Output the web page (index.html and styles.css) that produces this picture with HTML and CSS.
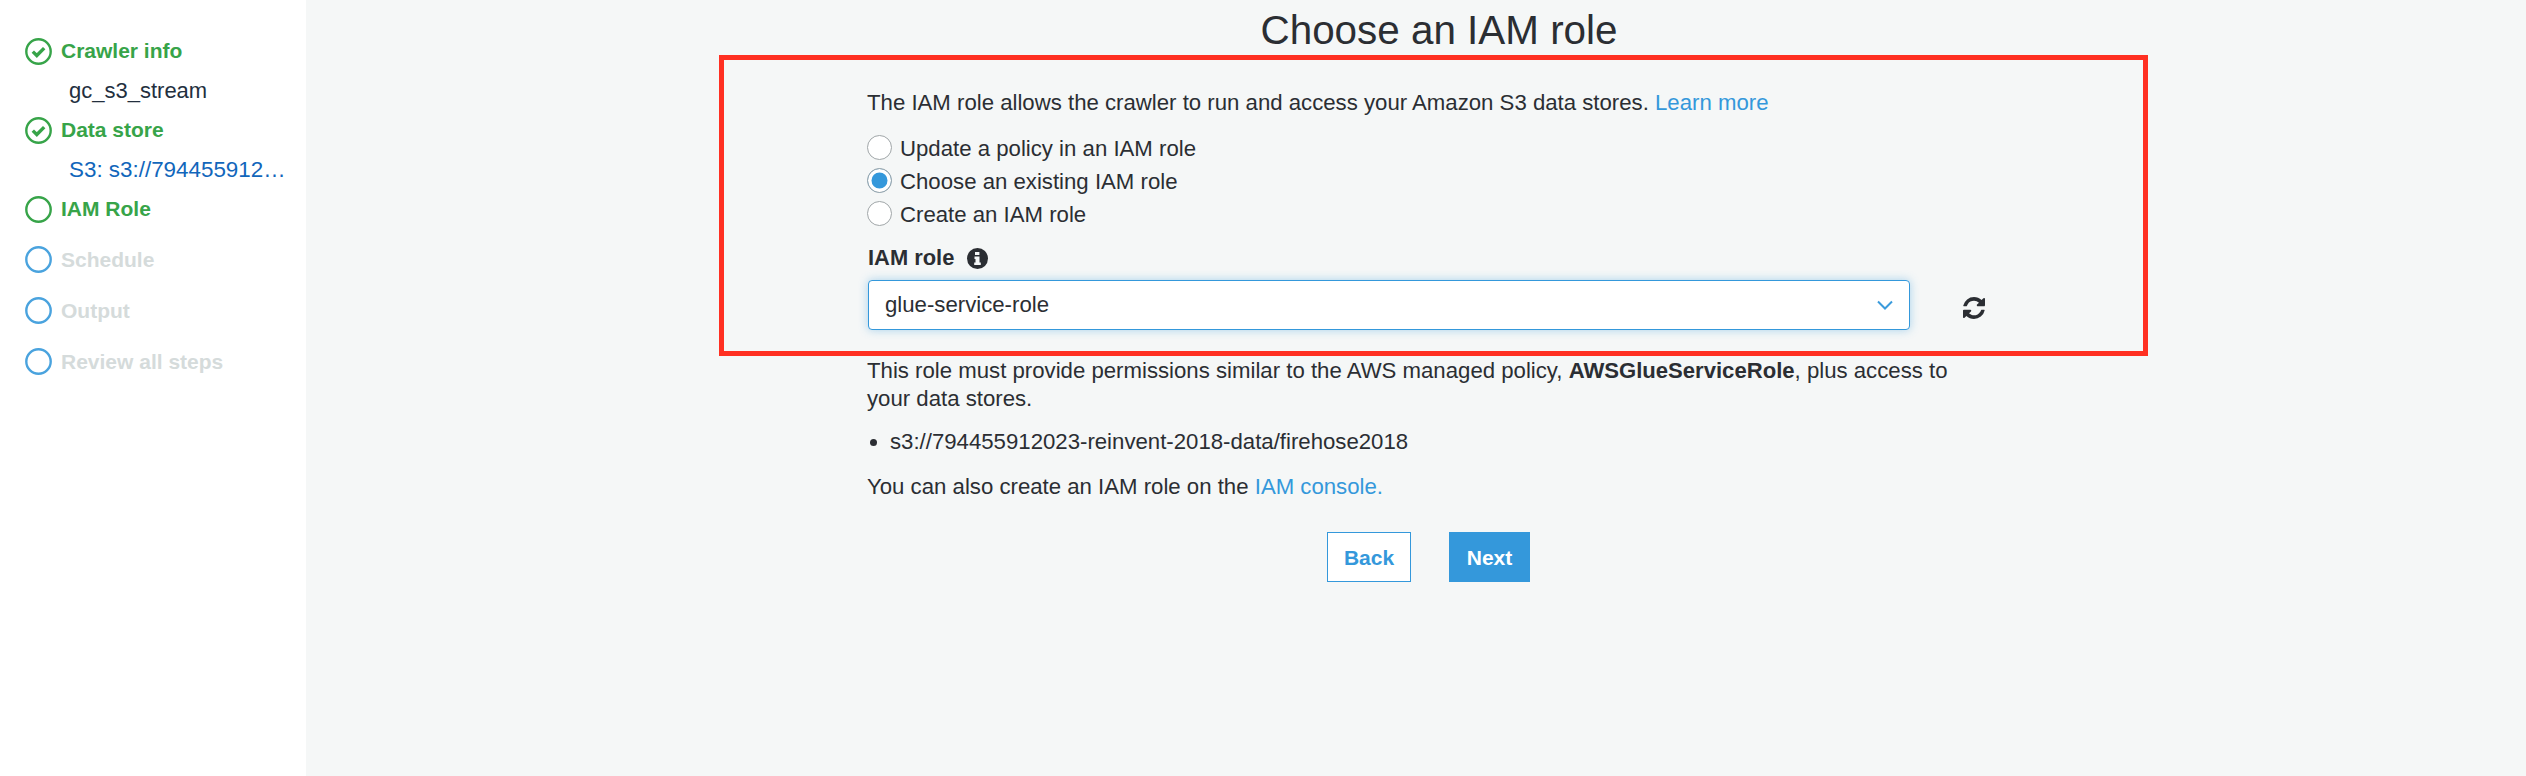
FILE: index.html
```html
<!DOCTYPE html>
<html lang="en">
<head>
<meta charset="utf-8">
<title>Choose an IAM role</title>
<link rel="stylesheet" href="styles.css">
</head>
<body>
<div class="page">
  <nav class="sidebar">
    <div class="step step-done">
      <svg class="step-icon" viewBox="0 0 27 27"><circle cx="13.5" cy="13.5" r="12.2" fill="none" stroke="#37a449" stroke-width="2.4"/><path d="M7.8 13.6l4 3.9 7.4-7.4" fill="none" stroke="#37a449" stroke-width="3.4"/></svg>
      <span>Crawler info</span>
    </div>
    <div class="step-detail">gc_s3_stream</div>
    <div class="step step-done">
      <svg class="step-icon" viewBox="0 0 27 27"><circle cx="13.5" cy="13.5" r="12.2" fill="none" stroke="#37a449" stroke-width="2.4"/><path d="M7.8 13.6l4 3.9 7.4-7.4" fill="none" stroke="#37a449" stroke-width="3.4"/></svg>
      <span>Data store</span>
    </div>
    <div class="step-detail step-link">S3: s3://794455912…</div>
    <div class="step step-done">
      <svg class="step-icon" viewBox="0 0 27 27"><circle cx="13.5" cy="13.5" r="12.2" fill="none" stroke="#37a449" stroke-width="2.4"/></svg>
      <span>IAM Role</span>
    </div>
    <div class="step step-todo">
      <svg class="step-icon" viewBox="0 0 27 27"><circle cx="13.5" cy="13.5" r="12.2" fill="none" stroke="#4aa3de" stroke-width="2.4"/></svg>
      <span>Schedule</span>
    </div>
    <div class="step step-todo">
      <svg class="step-icon" viewBox="0 0 27 27"><circle cx="13.5" cy="13.5" r="12.2" fill="none" stroke="#4aa3de" stroke-width="2.4"/></svg>
      <span>Output</span>
    </div>
    <div class="step step-todo">
      <svg class="step-icon" viewBox="0 0 27 27"><circle cx="13.5" cy="13.5" r="12.2" fill="none" stroke="#4aa3de" stroke-width="2.4"/></svg>
      <span>Review all steps</span>
    </div>
  </nav>
  <main class="main">
    <div class="highlight"></div>
    <div class="column">
      <h1 class="title">Choose an IAM role</h1>
      <p class="intro">The IAM role allows the crawler to run and access your Amazon S3 data stores. <a class="link" href="#">Learn more</a></p>
      <div class="radios">
        <div class="radio-row"><span class="radio"></span><span class="radio-label">Update a policy in an IAM role</span></div>
        <div class="radio-row"><span class="radio radio-on"></span><span class="radio-label">Choose an existing IAM role</span></div>
        <div class="radio-row"><span class="radio"></span><span class="radio-label">Create an IAM role</span></div>
      </div>
      <div class="field-label"><span>IAM role</span>
        <svg class="info-icon" viewBox="0 0 21 21"><circle cx="10.5" cy="10.5" r="10.5" fill="#2b2e33"/><path d="M8 4h4.4v3H8zM7.5 8.6h5v6h1.3v2.4H7.2v-2.4h1.3v-3.6h-1z" fill="#f5f7f7"/></svg>
      </div>
      <div class="select-row">
        <div class="select">
          <span>glue-service-role</span>
          <svg class="chevron" viewBox="0 0 16 10"><path d="M1 1.5l7 7 7-7" fill="none" stroke="#3a9bdc" stroke-width="2"/></svg>
        </div>
        <svg class="refresh" viewBox="128 128 1536 1536"><path d="M1639 1056q0 5-1 7-64 268-268 434.5t-478 166.5q-146 0-282.5-55t-243.5-157l-129 129q-19 19-45 19t-45-19-19-45v-448q0-26 19-45t45-19h448q26 0 45 19t19 45-19 45l-137 137q71 66 161 102t187 36q134 0 250-65t186-179q11-17 53-117 8-23 30-23h192q13 0 22.5 9.5t9.5 22.5zm25-800v448q0 26-19 45t-45 19h-448q-26 0-45-19t-19-45 19-45l138-138q-148-137-349-137-134 0-250 65t-186 179q-11 17-53 117-8 23-30 23h-199q-13 0-22.5-9.5t-9.5-22.5v-7q65-268 270-434.5t480-166.5q146 0 284 55.5t245 156.5l130-129q19-19 45-19t45 19 19 45z" fill="#2b2e33"/></svg>
      </div>
      <p class="note">This role must provide permissions similar to the AWS managed policy, <b>AWSGlueServiceRole</b>, plus access to your data stores.</p>
      <ul class="stores"><li>s3://794455912023-reinvent-2018-data/firehose2018</li></ul>
      <p class="console">You can also create an IAM role on the <a class="link" href="#">IAM console.</a></p>
      <div class="actions">
        <button class="btn btn-back">Back</button>
        <button class="btn btn-next">Next</button>
      </div>
    </div>
  </main>
</div>
</body>
</html>
```
FILE: styles.css
```css
* { box-sizing: border-box; }
html, body { margin: 0; height: 100%; }
body { font-family: "Liberation Sans", Arial, sans-serif; font-size: 22.2px; color: #2b2e33; background: #f5f7f7; }
.page { display: flex; height: 776px; overflow: hidden; }

.sidebar { width: 306px; flex: none; background: #fff; padding: 31px 0 0 25px; }
.step { display: flex; align-items: center; gap: 9px; height: 40px; font-weight: bold; font-size: 21px; }
.step-icon { width: 27px; height: 27px; flex: none; }
.step-done { color: #37a449; }
.step-todo { color: #d5dbdb; height: 51px; }
.step-done + .step-todo { margin-top: 5px; }
.step-detail { height: 39px; line-height: 40px; padding-left: 44px; color: #232f3e; font-size: 22px; }
.step-link { color: #1166bb; font-size: 22.4px; }

.main { position: relative; flex: 1; padding-left: 561px; }
.highlight { position: absolute; left: 413px; top: 55px; width: 1429px; height: 301px; border: 5px solid #ff3022; }
.column { width: 1118px; }
.title { margin: 0; height: 60px; line-height: 60px; padding-left: 26px; font-size: 40.4px; font-weight: normal; text-align: center; }
.intro { margin: 29px 0 0; line-height: 28px; }
.link { color: #3498db; text-decoration: none; }
.radios { margin-top: 14px; display: flex; flex-direction: column; }
.radio-row { display: flex; align-items: center; gap: 8px; height: 33px; }
.radio { width: 25px; height: 25px; border-radius: 50%; border: 1px solid #a0a6a8; background: #fff; flex: none; }
.radio-on { background: #3498db; box-shadow: inset 0 0 0 3.5px #fff; }
.radio-label { padding-top: 2px; }
.field-label { display: flex; align-items: center; gap: 13px; height: 30px; margin-top: 13px; padding-left: 1px; font-weight: bold; font-size: 21.9px; }
.info-icon { width: 21px; height: 21px; }
.select-row { display: flex; align-items: center; margin-top: 7px; padding-left: 1px; }
.select { width: 1042px; height: 50px; display: flex; align-items: center; justify-content: space-between; padding: 0 16px; background: #fff; border: 1.5px solid #3498db; border-radius: 4px; box-shadow: 0 0 10px rgba(52, 152, 219, .4); }
.chevron { width: 16px; height: 10px; }
.refresh { width: 22px; height: 22px; margin-left: 53px; margin-top: 6px; }
.note { margin: 27px 0 0; width: 1090px; line-height: 28px; }
.note b { font-size: 22.1px; }
.stores { margin: 15px 0 0; padding: 0 0 0 23px; line-height: 28px; }
.console { margin: 17px 0 0; line-height: 28px; }
.actions { display: flex; justify-content: center; gap: 38px; margin-top: 31px; padding-left: 5px; }
.btn { height: 50px; font: bold 21px "Liberation Sans", Arial, sans-serif; border: 1px solid #3498db; padding: 2px 0 0; }
.btn-back { width: 84px; background: #fff; color: #3498db; }
.btn-next { width: 81px; background: #3498db; color: #fff; }
```
